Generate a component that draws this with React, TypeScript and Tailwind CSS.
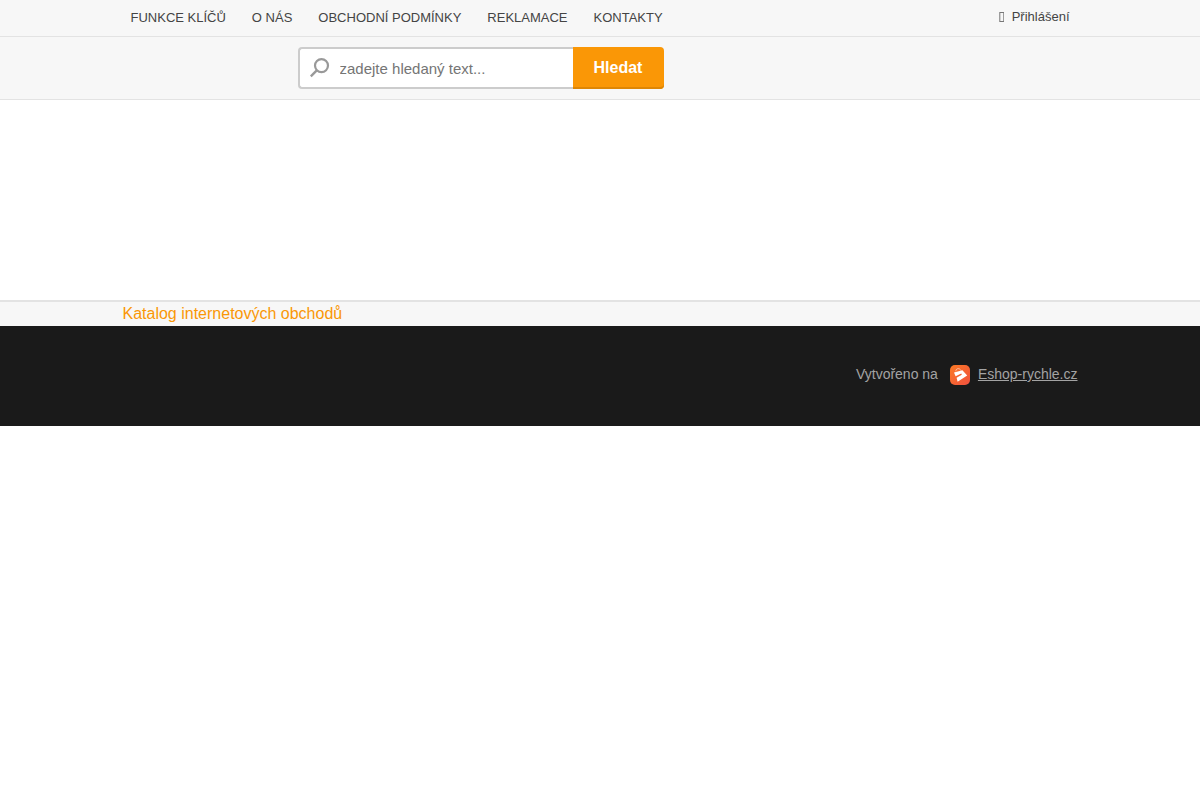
import { useState } from "react";

const menu = [
  { label: "FUNKCE KLÍČŮ", href: "#funkce-klicu" },
  { label: "O NÁS", href: "#o-nas" },
  { label: "OBCHODNÍ PODMÍNKY", href: "#obchodni-podminky" },
  { label: "REKLAMACE", href: "#reklamace" },
  { label: "KONTAKTY", href: "#kontakty" },
];

function SearchIcon() {
  return (
    <svg className="h-5 w-5 shrink-0" viewBox="0 0 20 20" fill="none" stroke="#999999" aria-hidden="true">
      <circle cx="11.5" cy="7.6" r="6.5" strokeWidth="2.2" />
      <path d="M7 12.2 0.8 18.4" strokeWidth="2.4" />
    </svg>
  );
}

function EshopLogo() {
  return (
    <svg className="h-5 w-5 shrink-0" viewBox="0 0 20 20" aria-hidden="true">
      <defs>
        <linearGradient id="eshop-logo" x1="0" y1="0" x2="1" y2="1">
          <stop offset="0" stopColor="#fb7a24" />
          <stop offset="1" stopColor="#f0503f" />
        </linearGradient>
      </defs>
      <rect width="20" height="20" rx="5" fill="url(#eshop-logo)" />
      <path d="M5.8 6.3C5.8 3.2 9.6 2.6 11 5.6" fill="none" stroke="#fff" strokeOpacity="0.6" strokeWidth="0.9" />
      <path d="M4 7.6 12.4 5.2 17.2 10.6 7.6 16.8 6.6 12.8 11.8 9.8 11.3 8.4 5.6 11.2Z" fill="#fff" />
    </svg>
  );
}

function TopBar() {
  return (
    <div className="border-b border-[#e3e3e3] bg-[#f7f7f7]">
      <div className="mx-auto flex max-w-[955px] items-start justify-between px-2 text-[13px] leading-5 text-[#444444]">
        <nav className="flex flex-wrap gap-x-[26px] py-2">
          {menu.map((item) => (
            <a key={item.href} href={item.href} className="hover:underline">
              {item.label}
            </a>
          ))}
        </nav>
        <a href="#prihlaseni" className="flex items-center gap-2 py-[7px] hover:underline">
          <svg className="h-[10px] w-[5px]" viewBox="0 0 5 10" fill="none" stroke="#777777" aria-hidden="true">
            <rect x="0.8" y="0.5" width="4" height="9" />
          </svg>
          Přihlášení
        </a>
      </div>
    </div>
  );
}

function SearchBar() {
  const [query, setQuery] = useState("");

  return (
    <header className="border-b border-[#e3e3e3] bg-[#f7f7f7]">
      <div className="mx-auto max-w-[955px] py-[10px] sm:pl-[175px]">
        <form role="search" className="flex h-[42px] max-w-[366px]" onSubmit={(e) => e.preventDefault()}>
          <label
            htmlFor="search"
            className="flex min-w-0 flex-1 items-center gap-[10px] rounded-l-sm border-2 border-r-0 border-[#cccccc] bg-white pl-[10px]"
          >
            <SearchIcon />
            <input
              id="search"
              type="text"
              aria-label="Hledat"
              value={query}
              onChange={(e) => setQuery(e.target.value)}
              placeholder="zadejte hledaný text..."
              className="min-w-0 flex-1 pt-[2px] text-[15px] text-[#444444] outline-none placeholder:text-[#757575]"
            />
          </label>
          <button
            type="submit"
            className="w-[91px] rounded-r-sm bg-[#fa9706] text-base font-bold text-white shadow-[inset_0_-2px_0_#de8604]"
          >
            Hledat
          </button>
        </form>
      </div>
    </header>
  );
}

export default function App() {
  return (
    <div className="bg-white font-['Liberation_Sans',Arial,sans-serif]">
      <TopBar />
      <SearchBar />
      <main className="min-h-[200px]" />
      <div className="border-t-2 border-[#e3e3e3] bg-[#f7f7f7]">
        <div className="mx-auto max-w-[955px] text-base leading-6">
          <a href="#katalog" className="text-[#fa9706] hover:underline">
            Katalog internetových obchodů
          </a>
        </div>
      </div>
      <footer className="bg-[#1a1a1a]">
        <div className="mx-auto flex max-w-[955px] justify-end pt-[37px] pb-[41px] text-sm leading-[22px] text-[#a3a3a3]">
          <span className="mr-3">Vytvořeno na</span>
          <a href="#eshop-rychle" className="flex items-end gap-2 underline">
            <EshopLogo />
            Eshop-rychle.cz
          </a>
        </div>
      </footer>
    </div>
  );
}
